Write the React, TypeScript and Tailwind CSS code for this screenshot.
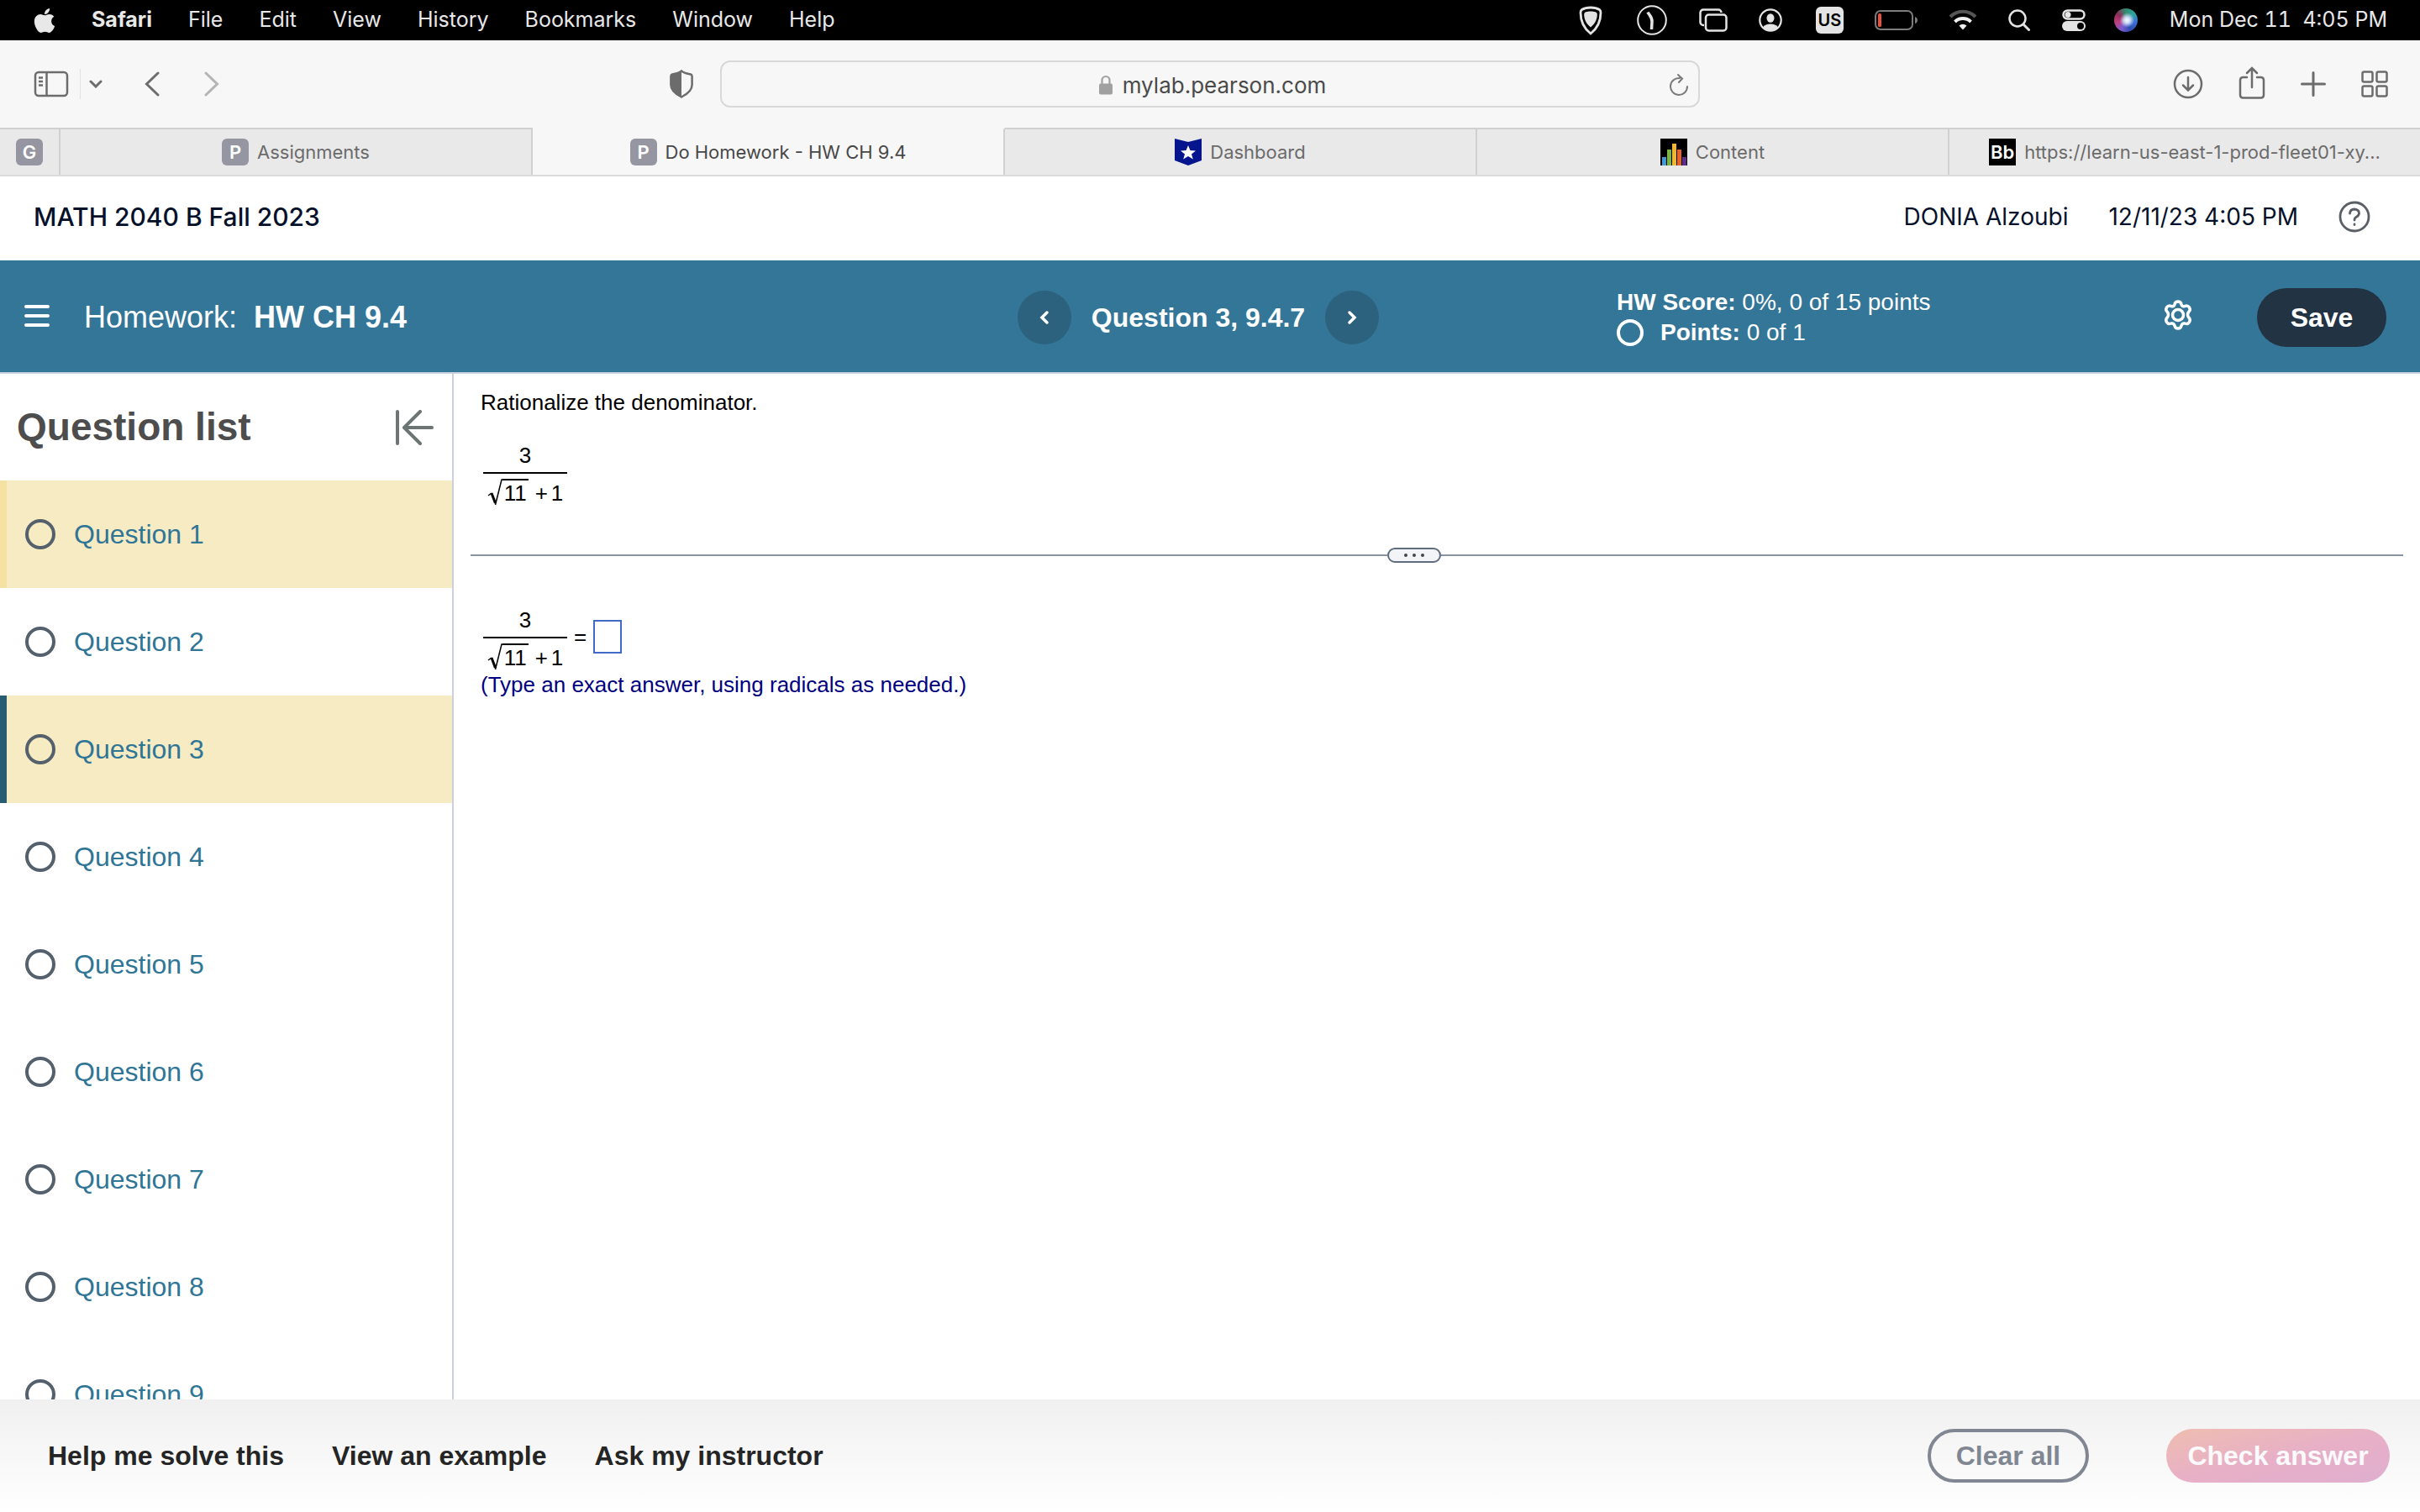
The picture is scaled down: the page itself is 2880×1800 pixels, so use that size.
import React, { useState } from 'react';
import { FaApple } from 'react-icons/fa';

const menus = ['File', 'Edit', 'View', 'History', 'Bookmarks', 'Window', 'Help'];
const questions = [1, 2, 3, 4, 5, 6, 7, 8, 9];

const LetterIcon = ({ letter }: { letter: string }) => (
  <span className="flex size-8 shrink-0 items-center justify-center rounded-md bg-[#9696a2] text-[22px] font-semibold text-white">{letter}</span>
);

const BadgeIcon = () => (
  <svg viewBox="0 0 32 32" className="size-8 shrink-0">
    <path d="M0 0 L16 4 L32 0 V26 L16 32 L0 26 Z" fill="#06148e" />
    <path d="M16 8 L18.5 14 L25 14.4 L20 18.4 L21.8 24.5 L16 21 L10.2 24.5 L12 18.4 L7 14.4 L13.5 14 Z" fill="#fff" />
  </svg>
);

const BarsIcon = () => (
  <svg viewBox="0 0 32 32" className="size-8 shrink-0">
    <rect width="32" height="32" fill="#000" />
    <rect x="2" y="22" width="5" height="10" fill="#3f9bd8" />
    <rect x="8" y="13" width="5" height="19" fill="#7db544" />
    <rect x="14" y="6" width="5" height="26" fill="#f3b72f" />
    <rect x="20" y="13" width="5" height="19" fill="#e8622c" />
    <rect x="26" y="22" width="5" height="10" fill="#5b2d8c" />
  </svg>
);

const BbIcon = () => (
  <span className="flex size-8 shrink-0 items-center justify-center bg-black text-[22px] font-semibold text-white">Bb</span>
);

const tabs = [
  { title: 'Assignments', icon: <LetterIcon letter="P" /> },
  { title: 'Do Homework - HW CH 9.4', icon: <LetterIcon letter="P" />, active: true },
  { title: 'Dashboard', icon: <BadgeIcon /> },
  { title: 'Content', icon: <BarsIcon /> },
  { title: 'https://learn-us-east-1-prod-fleet01-xy...', icon: <BbIcon /> }
];

const MenuBar = () => (
  <div className="flex h-12 shrink-0 items-center justify-between bg-black pr-[39px] pl-10 text-[25px] text-[#e8e8e8]">
    <div className="flex items-center gap-[43px]">
      <FaApple className="h-[33px] w-[26px]" />
      <span className="font-bold">Safari</span>
      {menus.map((m) => <span key={m}>{m}</span>)}
    </div>
    <div className="flex items-center">
      <svg viewBox="0 0 28 36" className="mr-[41px] h-9 w-7">
        <path d="M14 3 C18 3 22 4 24.500 5.500 Q26 6.500 26 9 C26 20 21 28.500 14 34 C7 28.500 2 20 2 9 Q2 6.500 3.500 5.500 C6 4 10 3 14 3 Z" fill="none" stroke="#e4e4e4" strokeWidth="2.800" />
        <path d="M14 7.500 C17 7.500 19.500 8 21 9 Q22 10 21.800 12 C21.500 18 18.500 23 14 26.500 C9.500 23 6.500 18 6.200 12 Q6 10 7 9 C8.500 8 11 7.500 14 7.500 Z" fill="#e4e4e4" />
      </svg>
      <svg viewBox="0 0 36 36" className="mr-[38px] size-9" fill="none" stroke="#e4e4e4">
        <circle cx="18" cy="18" r="16.800" strokeWidth="2" />
        <path d="M13 8.500 C14.500 12 18.500 14 18 20 L17.500 29" strokeWidth="3.500" />
      </svg>
      <svg viewBox="0 0 34 28" className="mr-[37px] h-7 w-[34px]" fill="none" stroke="#e4e4e4" strokeWidth="2.500">
        <path d="M6 20 H5 A3.500 3.500 0 0 1 1.500 16.500 V5 A3.500 3.500 0 0 1 5 1.500 H23 A3.500 3.500 0 0 1 26.500 5" />
        <rect x="8" y="7.500" width="24.500" height="19" rx="3.500" />
      </svg>
      <svg viewBox="0 0 28 28" className="mr-10 size-7">
        <circle cx="14" cy="14" r="12.700" fill="none" stroke="#e4e4e4" strokeWidth="2.200" />
        <ellipse cx="14" cy="11.500" rx="4.500" ry="5.200" fill="#e4e4e4" />
        <path d="M5 22.500 C7 19.500 10 18.500 14 18.500 C18 18.500 21 19.500 23 22.500 A13 13 0 0 1 5 22.500 Z" fill="#e4e4e4" />
      </svg>
      <span className="mr-[37px] flex h-8 w-[33px] items-center justify-center rounded-md bg-[#e4e4e4] text-xl font-semibold text-black">US</span>
      <svg viewBox="0 0 52 24" className="mr-9 h-6 w-[52px]">
        <rect x="1" y="1" width="44" height="22" rx="6" fill="none" stroke="#7c7c7c" strokeWidth="2" />
        <rect x="4" y="4" width="4" height="16" rx="1.500" fill="#ea4e3d" />
        <path d="M48 8 Q51 9 51 12 Q51 15 48 16 Z" fill="#7c7c7c" />
      </svg>
      <svg viewBox="0 0 34 26" className="mr-[37px] h-[26px] w-[34px]" fill="none" strokeWidth="4">
        <path d="M2 9 A21 21 0 0 1 32 9" stroke="#555" />
        <path d="M7.500 15 A13.500 13.500 0 0 1 26.500 15" stroke="#f0f0f0" />
        <path d="M17 24.500 L12.500 19.500 A7 7 0 0 1 21.500 19.500 Z" fill="#f0f0f0" />
      </svg>
      <svg viewBox="0 0 26 26" className="mr-[38px] size-[26px]" fill="none" stroke="#e4e4e4" strokeLinecap="round">
        <circle cx="11" cy="11" r="9.500" strokeWidth="2.500" />
        <path d="M18 18 L24.500 24.500" strokeWidth="3" />
      </svg>
      <svg viewBox="0 0 28 26" className="mr-[34px] h-[26px] w-7">
        <rect x="1.500" y="1.500" width="25" height="10" rx="5" fill="none" stroke="#e4e4e4" strokeWidth="2.500" />
        <circle cx="7" cy="6.500" r="3.500" fill="#e4e4e4" />
        <rect y="14" width="28" height="12" rx="6" fill="#e4e4e4" />
        <circle cx="22" cy="20" r="4" fill="#000" />
      </svg>
      <span className="mr-[38px] size-7 rounded-full bg-[radial-gradient(circle_at_55%_50%,#fff_0%,#c8d8f4_18%,transparent_42%),conic-gradient(#2f8f6e,#2fa3a0,#3a6fd8,#2c4db0,#7b5bd0,#c23d7c,#8a2f58,#2f8f6e)]" />
      <span className="whitespace-pre tabular-nums">Mon Dec 11  4:05 PM</span>
    </div>
  </div>
);

const Toolbar = () => (
  <div className="grid h-[104px] shrink-0 grid-cols-[1fr_auto_1fr] items-center bg-[#f7f7f7] text-[#6c6c6c]">
    <div className="flex items-center justify-between pr-8 pl-10">
      <div className="flex items-center">
        <button aria-label="Sidebar" className="mr-[13px]">
          <svg viewBox="0 0 42 32" className="h-8 w-[42px]" fill="none" stroke="currentColor" strokeWidth="2.500">
            <rect x="2" y="2" width="38" height="28" rx="4" />
            <path d="M15.500 2 V30 M6 8.500 H11 M6 13 H11 M6 17.500 H11" />
          </svg>
        </button>
        <span className="h-9 w-px bg-[#e2e2e2]" />
        <button aria-label="Tab groups" className="ml-2.5">
          <svg viewBox="0 0 16 10" className="h-2.5 w-4" fill="none" stroke="currentColor" strokeWidth="3" strokeLinecap="round"><path d="M2 2 L8 8 L14 2" /></svg>
        </button>
        <button aria-label="Back" className="ml-[50px]">
          <svg viewBox="0 0 18 30" className="h-[30px] w-[18px]" fill="none" stroke="currentColor" strokeWidth="3" strokeLinecap="round"><path d="M16 2 L2.500 15 L16 28" /></svg>
        </button>
        <button aria-label="Forward" className="ml-[53px] text-[#b4b4b4]">
          <svg viewBox="0 0 18 30" className="h-[30px] w-[18px]" fill="none" stroke="currentColor" strokeWidth="3" strokeLinecap="round"><path d="M2 2 L15.500 15 L2 28" /></svg>
        </button>
      </div>
      <button aria-label="Privacy report">
        <svg viewBox="0 0 28 34" className="h-[34px] w-7">
          <path d="M14 1.500 C17 4 22 5 25 5.500 Q26.600 6 26.600 8 V18 C26.600 25 20 29.500 14 32.500 C8 29.500 1.400 25 1.400 18 V8 Q1.400 6 3 5.500 C6 5 11 4 14 1.500 Z" fill="none" stroke="currentColor" strokeWidth="2.500" />
          <path d="M14 1.500 V32.500 C8 29.500 1.400 25 1.400 18 V8 Q1.400 6 3 5.500 C6 5 11 4 14 1.500 Z" fill="currentColor" />
        </svg>
      </button>
    </div>
    <div className="flex h-14 w-[40.5vw] items-center rounded-xl border-2 border-[#d8d8d8] pt-0.5 pr-3 pl-10 text-[26px] text-[#4a4a4a]">
      <div className="flex flex-1 items-center justify-center gap-3">
        <svg viewBox="0 0 16 24" className="h-6 w-4">
          <path d="M3.500 11 V6.500 A4.500 4.500 0 0 1 12.500 6.500 V11" fill="none" stroke="#a0a0a0" strokeWidth="2.200" />
          <rect y="10.500" width="16" height="13" rx="2" fill="#a0a0a0" />
        </svg>
        <span>mylab.pearson.com</span>
      </div>
      <button aria-label="Reload">
        <svg viewBox="0 0 22 26" className="h-[26px] w-[22px]" fill="none" stroke="#7a7a7a" strokeWidth="2" strokeLinecap="round">
          <path d="M12 5 A10 10 0 1 0 21 15 M10 1 L15 5.500 L11 10" />
        </svg>
      </button>
    </div>
    <div className="flex items-center justify-end gap-[42px] pr-[38px]">
      <button aria-label="Downloads">
        <svg viewBox="0 0 36 36" className="size-9" fill="none" stroke="currentColor" strokeWidth="2.500" strokeLinecap="round">
          <circle cx="18" cy="18" r="16" /><path d="M18 10 V25 M12 19.500 L18 25.500 L24 19.500" />
        </svg>
      </button>
      <button aria-label="Share">
        <svg viewBox="0 0 32 42" className="h-[42px] w-8" fill="none" stroke="currentColor" strokeWidth="2.500" strokeLinecap="round">
          <path d="M10 13 H5.500 Q2 13 2 16.500 V34 Q2 37.500 5.500 37.500 H26.500 Q30 37.500 30 34 V16.500 Q30 13 26.500 13 H22 M16 25 V3 M10 8 L16 2 L22 8" />
        </svg>
      </button>
      <button aria-label="New tab">
        <svg viewBox="0 0 30 30" className="size-[30px]" fill="none" stroke="currentColor" strokeWidth="3" strokeLinecap="round"><path d="M15 1.500 V28.500 M1.500 15 H28.500" /></svg>
      </button>
      <button aria-label="Tab overview">
        <svg viewBox="0 0 32 32" className="size-8" fill="none" stroke="currentColor" strokeWidth="2.500">
          <rect x="1.500" y="1.500" width="12" height="12" rx="2" /><rect x="18.500" y="1.500" width="12" height="12" rx="2" />
          <rect x="1.500" y="18.500" width="12" height="12" rx="2" /><rect x="18.500" y="18.500" width="12" height="12" rx="2" />
        </svg>
      </button>
    </div>
  </div>
);

const TabBar = () => (
  <div className="flex h-[58px] shrink-0 border-b-2 border-[#dcdcdc] bg-[#e9e9e9] text-[22px] text-[#6b6b6b]">
    <button className="flex w-[72px] items-center justify-center border-t-2 border-r-2 border-[#d0d0d0]"><LetterIcon letter="G" /></button>
    {tabs.map((tab) => (
      <button
        key={tab.title}
        className={tab.active
          ? 'flex min-w-0 flex-1 items-center justify-center gap-2.5 border-t-2 border-r-2 border-t-[#f7f7f7] border-r-[#d0d0d0] bg-[#f7f7f7] text-[#484848]'
          : 'flex min-w-0 flex-1 items-center justify-center gap-2.5 border-t-2 border-r-2 border-[#d0d0d0] last:border-r-0'}
      >
        {tab.icon}
        <span className="whitespace-nowrap">{tab.title}</span>
      </button>
    ))}
  </div>
);

const Fraction = () => (
  <div className="flex w-[100px] flex-col items-center text-[26px] leading-[30px]">
    <span>3</span>
    <span className="mt-[5px] h-0.5 w-full bg-black" />
    <span className="mt-1.5 flex items-start">
      <svg viewBox="0 0 18 32" className="h-8 w-[18px]" fill="none" stroke="#000">
        <path d="M1 20 L5 17" strokeWidth="1.500" />
        <path d="M5 17 L9.500 29" strokeWidth="3" />
        <path d="M9.500 31 L17 1 H18" strokeWidth="1.500" />
      </svg>
      <span className="border-t-2 border-black px-0.5">11</span>
      <span className="ml-2 pt-0.5">+</span>
      <span className="ml-1 pt-0.5">1</span>
    </span>
  </div>
);

const AssignmentBar = () => (
  <div className="grid h-[135px] shrink-0 grid-cols-3 items-center border-b-2 border-[#c8d2de] bg-[#337698] pt-0.5 text-white">
    <div className="flex items-center pl-7">
      <button aria-label="Menu" className="mr-10">
        <svg viewBox="0 0 32 32" className="h-8 w-8" stroke="#fff" strokeWidth="4" strokeLinecap="round"><path d="M3 3 H29 M3 14 H29 M3 25 H29" /></svg>
      </button>
      <h1 className="text-4xl">Homework:<b className="ml-5">HW CH 9.4</b></h1>
    </div>
    <div className="flex items-center justify-center pr-7">
      <button aria-label="Previous question" className="flex size-16 items-center justify-center rounded-full bg-[#2d627e]">
        <svg viewBox="0 0 12 18" className="h-[18px] w-3" fill="none" stroke="#fff" strokeWidth="3.500" strokeLinecap="round"><path d="M9 3 L3 9 L9 15" /></svg>
      </button>
      <h2 className="mx-6 text-[32px] font-bold whitespace-nowrap">Question 3, 9.4.7</h2>
      <button aria-label="Next question" className="flex size-16 items-center justify-center rounded-full bg-[#2d627e]">
        <svg viewBox="0 0 12 18" className="h-[18px] w-3" fill="none" stroke="#fff" strokeWidth="3.500" strokeLinecap="round"><path d="M3 3 L9 9 L3 15" /></svg>
      </button>
    </div>
    <div className="flex items-center justify-between pr-10 pl-1">
      <div className="text-[28px] leading-9">
        <p><b>HW Score:</b> 0%, 0 of 15 points</p>
        <p className="flex items-center">
          <span className="mr-5 size-8 rounded-full border-4 border-white" />
          <span><b>Points:</b> 0 of 1</span>
        </p>
      </div>
      <div className="flex items-center gap-[75px]">
        <button aria-label="Settings">
          <svg viewBox="0 0 38 42" className="h-[42px] w-[38px]" fill="none" stroke="#fff" strokeWidth="3.500" strokeLinejoin="round">
            <path d="M15 5.500 Q15.500 2 19 2 Q22.500 2 23 5.500 Q24 8.500 27 7.500 Q30.500 6 32.500 9 Q34.500 12 31.500 14.500 Q29.500 17.500 31.500 20.500 Q34.500 23.500 32.500 26.500 Q30.500 29.500 27 28 Q24 27.500 23 30.500 Q22.500 34 19 34 Q15.500 34 15 30.500 Q14 27.500 11 28 Q7.500 29.500 5.500 26.500 Q3.500 23.500 6.500 20.500 Q8.500 17.500 6.500 14.500 Q3.500 12 5.500 9 Q7.500 6 11 7.500 Q14 8.500 15 5.500 Z" />
            <circle cx="19" cy="18" r="6.500" />
          </svg>
        </button>
        <button className="h-[70px] w-[154px] rounded-full bg-[#223343] text-[32px] font-bold">Save</button>
      </div>
    </div>
  </div>
);

export default function App() {
  const [current, setCurrent] = useState(3);
  const [answer, setAnswer] = useState('');

  return (
    <div className="flex h-screen flex-col overflow-hidden bg-white font-[Inter,sans-serif]">
      <MenuBar />
      <Toolbar />
      <TabBar />

      <header className="flex h-[100px] shrink-0 items-center justify-between pr-[59px] pb-1 pl-10 text-[28px] text-[#05112a]">
        <span className="text-[30px] font-medium">MATH 2040 B Fall 2023</span>
        <div className="flex items-center gap-12">
          <span>DONIA Alzoubi</span>
          <span>12/11/23 4:05 PM</span>
          <button aria-label="Help">
            <svg viewBox="0 0 38 38" className="size-[38px]" fill="none" stroke="#5a5f66" strokeWidth="2.800" strokeLinecap="round">
              <circle cx="19" cy="19" r="17" />
              <path d="M13.500 15 Q14 10 19 10 Q24.500 10.500 24.500 15 Q24 18 21 19.500 Q19 20.500 19 23 M19 28 V28.500" />
            </svg>
          </button>
        </div>
      </header>

      <div className="flex min-h-0 flex-1 flex-col font-['Liberation_Sans',Arial,sans-serif]">
        <AssignmentBar />

        <div className="flex min-h-0 flex-1">
          <aside className="w-[540px] shrink-0 overflow-hidden border-r-2 border-[#cbd0de]">
            <div className="flex h-[127px] items-center justify-between px-5">
              <h2 className="text-[46px] font-bold text-[#4d4d4d]">Question list</h2>
              <button aria-label="Collapse question list">
                <svg viewBox="0 0 48 42" className="h-[42px] w-12" fill="none" stroke="#6c7474" strokeWidth="4" strokeLinecap="round" strokeLinejoin="round">
                  <path d="M3 2 V40 M44 21 H11 M30 2 L11 21 L30 40" />
                </svg>
              </button>
            </div>
            <ul>
              {questions.map((n) => (
                <li key={n}>
                  <button
                    onClick={() => setCurrent(n)}
                    className={n === current
                      ? 'flex h-32 w-full items-center gap-[22px] border-l-8 border-[#275c73] bg-[#f7ebc4] pl-[22px]'
                      : n === 1
                        ? 'flex h-32 w-full items-center gap-[22px] border-l-8 border-[#f5e1a1] bg-[#f7ebc4] pl-[22px]'
                        : 'flex h-32 w-full items-center gap-[22px] border-l-8 border-transparent pl-[22px]'}
                  >
                    <span className="size-9 rounded-full border-4 border-[#54606c]" />
                    <span className="text-[32px] text-[#2f7596]">Question {n}</span>
                  </button>
                </li>
              ))}
            </ul>
          </aside>

          <main className="min-w-0 flex-1 px-5 pt-[19px] text-[26px] leading-[30px] text-black">
            <p className="pl-3">Rationalize the denominator.</p>
            <div className="mt-[33px] pl-[15px]"><Fraction /></div>
            {/* Splitter sits a little left of centre */}
            <div className="mt-[50px] flex h-[18px] items-center">
              <span className="h-0.5 flex-[20] bg-[#8a92a4]" />
              <button aria-label="Resize panels" className="flex h-[18px] w-16 items-center justify-center gap-1.5 rounded-full border-2 border-[#5f6d7e] bg-[#f2f4f7]">
                <i className="size-1 rounded-full bg-[#444]" />
                <i className="size-1 rounded-full bg-[#444]" />
                <i className="size-1 rounded-full bg-[#444]" />
              </button>
              <span className="h-0.5 flex-[21] bg-[#8a92a4]" />
            </div>
            <div className="mt-[53px] flex items-center pl-[15px]">
              <Fraction />
              <label className="flex items-center gap-2 pb-1.5 pl-2">
                <span>=</span>
                <input
                  aria-label="Answer"
                  value={answer}
                  onChange={(e) => setAnswer(e.target.value)}
                  className="h-10 w-[34px] border-2 border-[#4169c8] text-center outline-none"
                />
              </label>
            </div>
            <p className="mt-0.5 pl-3 text-[#000080]">(Type an exact answer, using radicals as needed.)</p>
          </main>
        </div>

        <footer className="flex h-[134px] shrink-0 items-center justify-between bg-linear-to-b from-[#f0f0f0] to-white pr-9 pl-[57px] text-[32px] font-bold text-[#252525]">
          <div className="flex gap-[57px]">
            <button>Help me solve this</button>
            <button>View an example</button>
            <button>Ask my instructor</button>
          </div>
          <div className="flex gap-[92px]">
            <button className="h-16 w-48 rounded-full border-4 border-[#808793] text-[#808793]">Clear all</button>
            <button className="h-16 w-[266px] rounded-full bg-linear-to-br from-[#efbdb0] via-[#e8b0c6] to-[#dfaed0] text-[#fafafc]">Check answer</button>
          </div>
        </footer>
      </div>
    </div>
  );
}
